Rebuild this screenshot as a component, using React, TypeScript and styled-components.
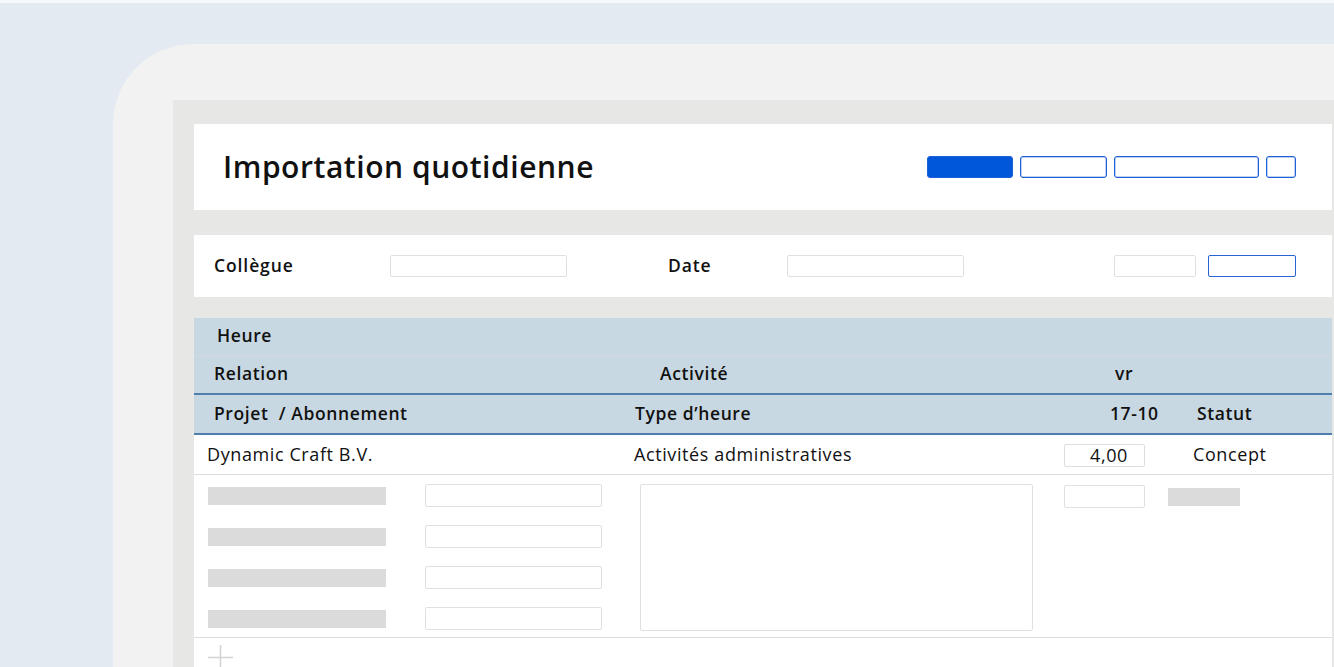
import React from 'react'
import styled, { createGlobalStyle } from 'styled-components'

const GlobalStyle = createGlobalStyle`
  html, body {
    margin: 0;
    padding: 0;
    height: 100%;
    overflow: hidden;
  }
  body {
    font-family: "Open Sans", Lato, sans-serif;
    color: #111;
  }
  #root {
    height: 100%;
  }
`

const Page = styled.div`
  height: 667px;
  background: #e3eaf1;
  border-top: 3px solid #f6f8fa;
  box-sizing: border-box;
  padding: 41px 0 0 113px;
  display: flex;
`
const Device = styled.div`
  flex: 1;
  background: #f2f2f2;
  border-top-left-radius: 80px;
  padding: 56px 0 0 60px;
  display: flex;
`
const Screen = styled.div`
  flex: 1;
  background: #e7e7e6;
  padding: 24px 2px 0 21px;
  display: flex;
  flex-direction: column;
`
const Card = styled.div<{ $height: number; $mb: number }>`
  background: #fff;
  height: ${({ $height }) => $height}px;
  margin-bottom: ${({ $mb }) => $mb}px;
  display: flex;
  align-items: center;
  flex-shrink: 0;
`
const Title = styled.h1`
  margin: -2px 0 0 29px;
  font-size: 30px;
  font-weight: 600;
  letter-spacing: 0.55px;
  flex: 1;
`
const ButtonGroup = styled.div`
  display: flex;
  gap: 7px;
  margin-right: 36px;
`
const Button = styled.div<{ $width: number; $primary?: boolean }>`
  width: ${({ $width }) => $width}px;
  height: 22px;
  box-sizing: border-box;
  border-radius: 3px;
  border: 1px solid #1d5fd4;
  background: ${({ $primary }) => ($primary ? '#0057d9' : '#fff')};
  box-shadow: ${({ $primary }) => ($primary ? 'none' : 'inset 0 0 0 0.5px #7fa6e8')};
`
const FilterLabel = styled.span<{ $width: number }>`
  width: ${({ $width }) => $width}px;
  font-size: 17.5px;
  font-weight: 600;
  letter-spacing: 0.9px;
  margin-top: -3px;
`
const Input = styled.div<{ $width: number; $height?: number; $active?: boolean }>`
  width: ${({ $width }) => $width}px;
  height: ${({ $height }) => $height ?? 22}px;
  box-sizing: border-box;
  border: 1px solid ${({ $active }) => ($active ? '#2663d6' : '#e0e0e0')};
  border-radius: 2px;
  background: #fff;
  flex-shrink: 0;
`
const FilterRow = styled.div`
  display: flex;
  align-items: center;
  padding: 0 36px 0 20px;
  flex: 1;
`
const Spacer = styled.div<{ $width?: number }>`
  ${({ $width }) => ($width ? `width: ${$width}px;` : 'flex: 1;')}
`
const Table = styled.div`
  background: #fff;
  flex: 1;
  display: flex;
  flex-direction: column;
`
const HeadRow = styled.div<{ $height: number; $line: string; $pl: number }>`
  height: ${({ $height }) => $height}px;
  box-sizing: border-box;
  background: #c8d8e2;
  border-bottom: ${({ $line }) => $line};
  display: flex;
  align-items: center;
  padding: 0 0 3px ${({ $pl }) => $pl}px;
  font-size: 17.5px;
  font-weight: 600;
  letter-spacing: 0.6px;
`
const Cell = styled.span<{ $width?: number }>`
  ${({ $width }) => ($width ? `width: ${$width}px;` : '')}
  flex-shrink: 0;
  white-space: nowrap;
`
const DataRow = styled.div`
  height: 40px;
  box-sizing: border-box;
  border-bottom: 1px solid #dcdcdc;
  display: flex;
  align-items: center;
  padding: 0 0 1px 13px;
  font-size: 18px;
  letter-spacing: 0.6px;
`
const ValueBox = styled.div`
  width: 81px;
  height: 23px;
  box-sizing: border-box;
  border: 1px solid #dedede;
  border-radius: 2px;
  text-align: right;
  padding-right: 16px;
  line-height: 21px;
  margin-right: 48px;
  margin-top: 2px;
`
const EditArea = styled.div`
  display: flex;
  align-items: flex-start;
  padding: 9px 0 6px 14px;
  border-bottom: 1px solid #dcdcdc;
`
const Stack = styled.div<{ $gap: number; $pt?: number; $mr: number }>`
  display: flex;
  flex-direction: column;
  gap: ${({ $gap }) => $gap}px;
  padding-top: ${({ $pt }) => $pt ?? 0}px;
  margin-right: ${({ $mr }) => $mr}px;
`
const Skeleton = styled.div<{ $width: number; $mt?: number }>`
  width: ${({ $width }) => $width}px;
  height: 18px;
  background: #dbdbdb;
  margin-top: ${({ $mt }) => $mt ?? 0}px;
  flex-shrink: 0;
`
const Footer = styled.div`
  padding: 7px 0 0 14px;
`
const PlusIcon = () => (
  <svg width="25" height="25" viewBox="0 0 25 25">
    <path d="M12.5 0V25M0 12.5H25" stroke="#d3d3d3" strokeWidth="1.5" fill="none" />
  </svg>
)

const App = () => (
  <>
    <GlobalStyle />
    <Page>
      <Device>
        <Screen>
          <Card $height={86} $mb={25}>
            <Title>Importation quotidienne</Title>
            <ButtonGroup>
              <Button $width={86} $primary />
              <Button $width={87} />
              <Button $width={145} />
              <Button $width={30} />
            </ButtonGroup>
          </Card>
          <Card $height={62} $mb={21}>
            <FilterRow>
              <FilterLabel $width={176}>Collègue</FilterLabel>
              <Input $width={177} />
              <Spacer $width={101} />
              <FilterLabel $width={119}>Date</FilterLabel>
              <Input $width={177} />
              <Spacer />
              <Input $width={82} />
              <Spacer $width={12} />
              <Input $width={88} $active />
            </FilterRow>
          </Card>
          <Table>
            <HeadRow $height={38} $line="1px solid #d3dadf" $pl={23}>
              <Cell>Heure</Cell>
            </HeadRow>
            <HeadRow $height={39} $line="2px solid #4f7fab" $pl={20}>
              <Cell $width={446}>Relation</Cell>
              <Cell $width={455}>Activité</Cell>
              <Cell>vr</Cell>
            </HeadRow>
            <HeadRow $height={40} $line="2px solid #4f7fab" $pl={20}>
              <Cell $width={421}>Projet &nbsp;/ Abonnement</Cell>
              <Cell $width={475}>Type d’heure</Cell>
              <Cell $width={87}>17-10</Cell>
              <Cell>Statut</Cell>
            </HeadRow>
            <DataRow>
              <Cell $width={427}>Dynamic Craft B.V.</Cell>
              <Cell $width={430}>Activités administratives</Cell>
              <ValueBox>4,00</ValueBox>
              <Cell>Concept</Cell>
            </DataRow>
            <EditArea>
              <Stack $gap={23} $pt={3} $mr={39}>
                <Skeleton $width={178} />
                <Skeleton $width={178} />
                <Skeleton $width={178} />
                <Skeleton $width={178} />
              </Stack>
              <Stack $gap={18} $mr={38}>
                <Input $width={177} $height={23} />
                <Input $width={177} $height={23} />
                <Input $width={177} $height={23} />
                <Input $width={177} $height={23} />
              </Stack>
              <Stack $gap={0} $mr={31}>
                <Input $width={393} $height={147} />
              </Stack>
              <Stack $gap={0} $pt={1} $mr={23}>
                <Input $width={81} $height={23} />
              </Stack>
              <Skeleton $width={72} $mt={4} />
            </EditArea>
            <Footer>
              <PlusIcon />
            </Footer>
          </Table>
        </Screen>
      </Device>
    </Page>
  </>
)

export default App
